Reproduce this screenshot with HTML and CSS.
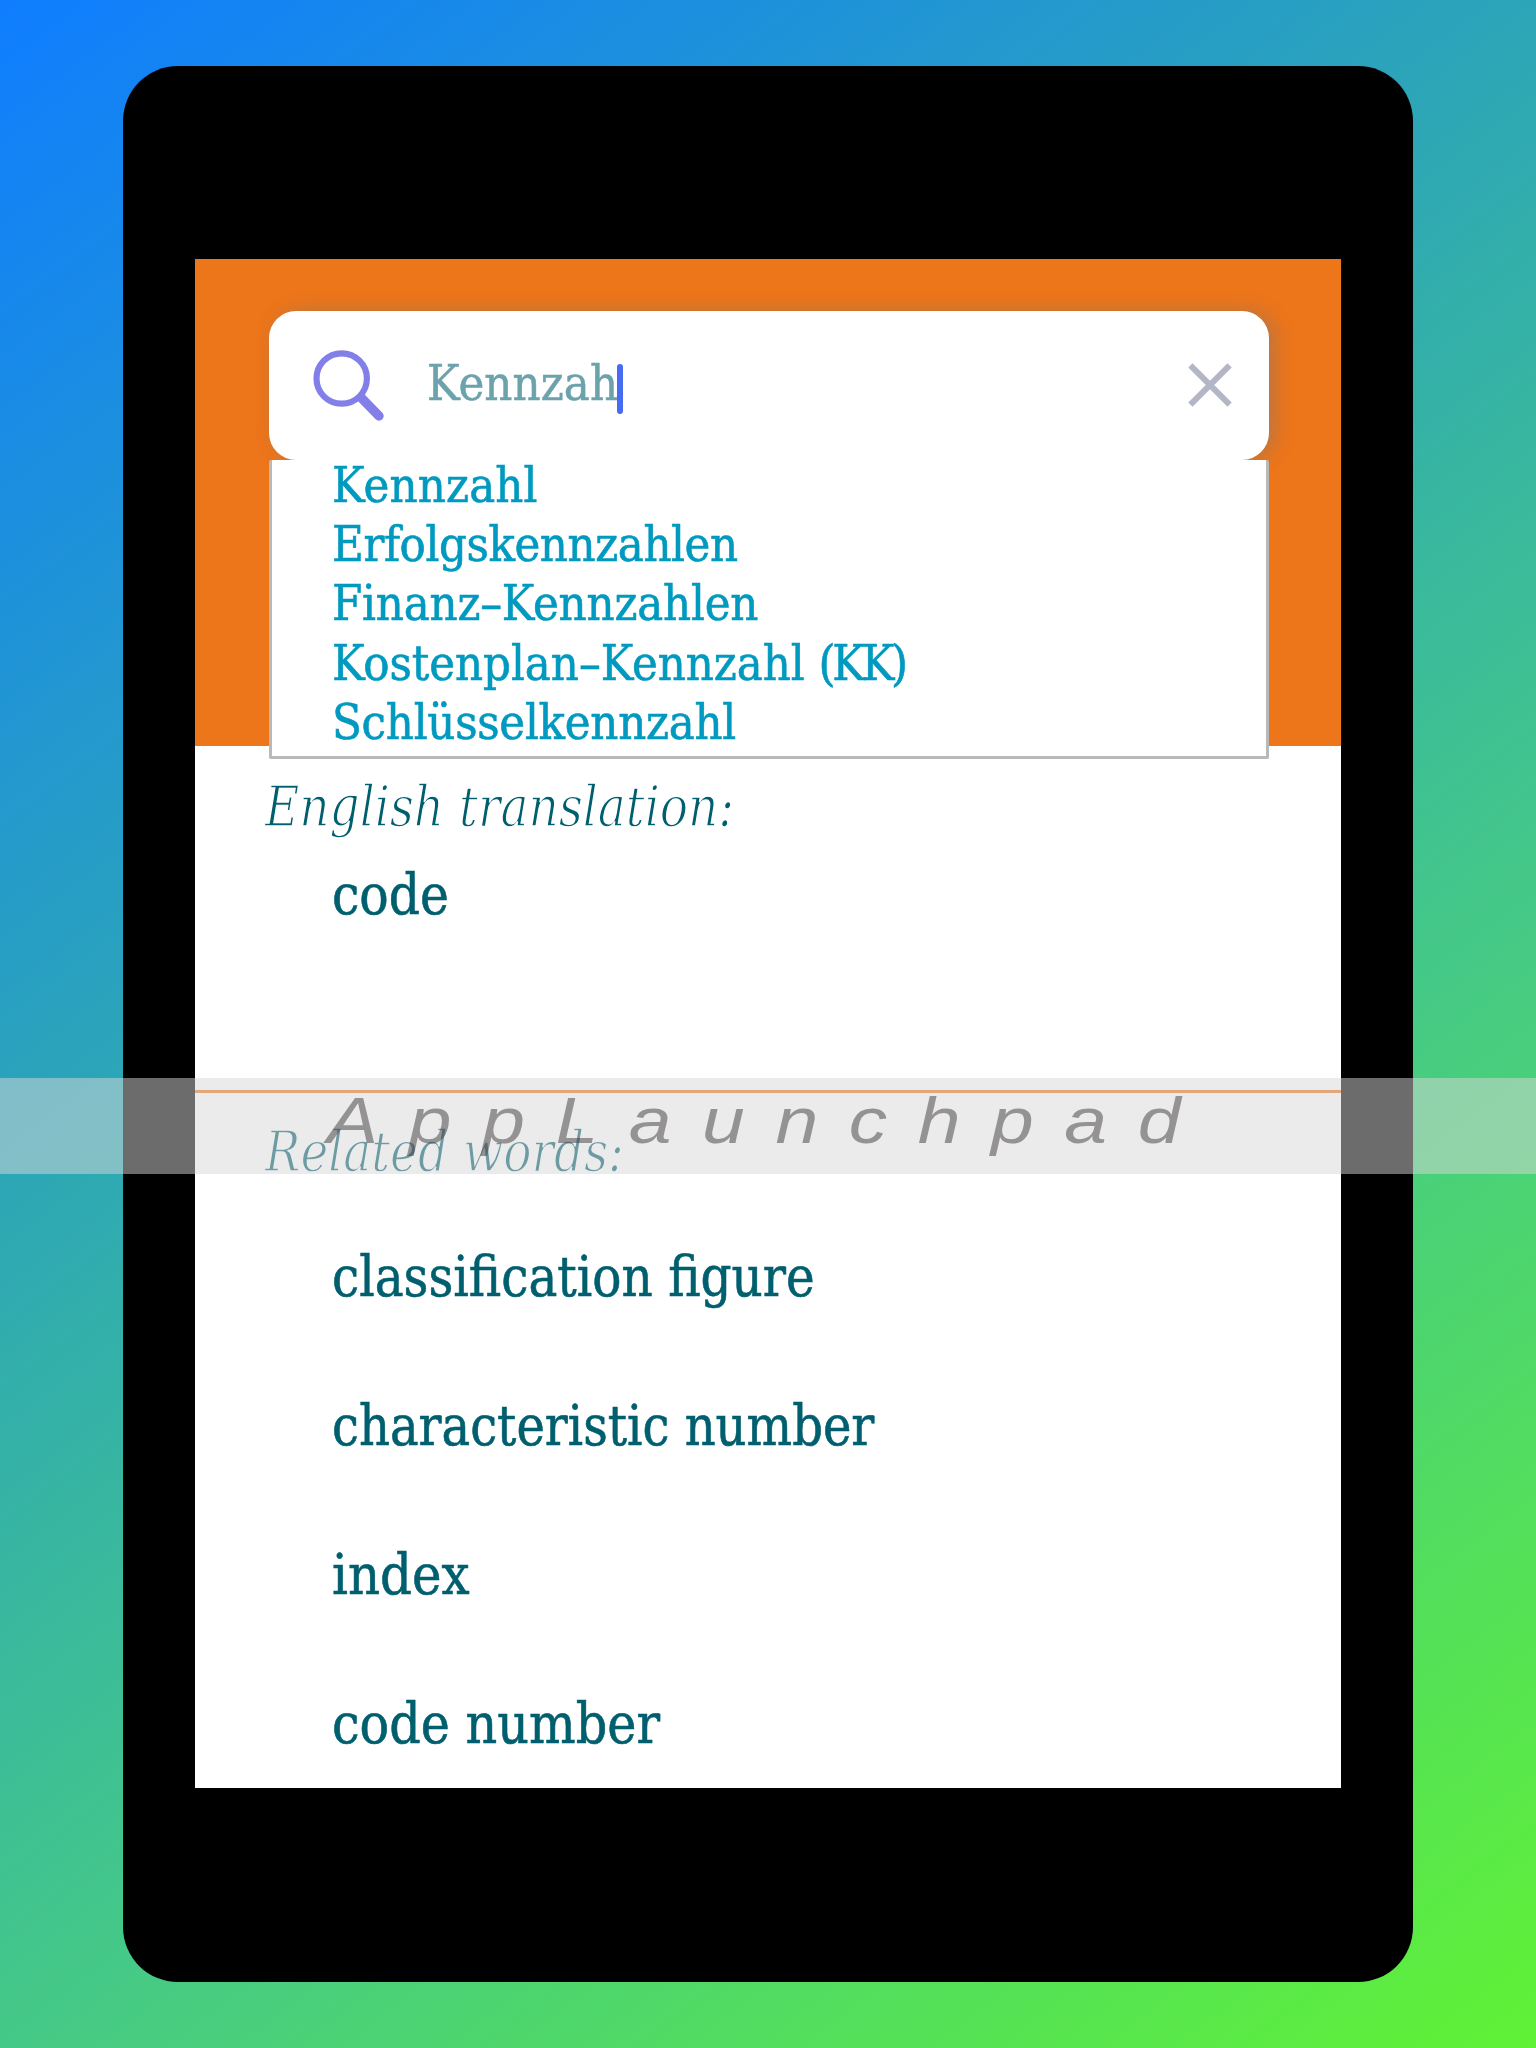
FILE: index.html
```html
<!DOCTYPE html>
<html lang="en">
<head>
<meta charset="utf-8">
<title>Dictionary</title>
<link rel="stylesheet" href="styles.css">
</head>
<body>
<div class="stage">
  <div class="tablet">
    <main class="screen">
      <header class="header">
        <div class="search">
          <svg class="search-icon" width="76" height="76" viewBox="0 0 76 76" fill="none" stroke="#827fe8">
            <circle cx="30.7" cy="30.5" r="25.2" stroke-width="6.2"/>
            <path d="M50.5 50L68 68" stroke-width="9.4" stroke-linecap="round"/>
          </svg>
          <span class="query">Kennzah</span><span class="caret"></span>
          <svg class="clear" width="44" height="44" viewBox="0 0 44 44" stroke="#b3b7c5" stroke-width="6"><path d="M2.4 2.4L41.6 41.6M41.6 2.4L2.4 41.6"/></svg>
        </div>
        <ul class="suggestions">
          <li class="s1">Kennzahl</li>
          <li class="s2">Erfolgskennzahlen</li>
          <li class="s3">Finanz–Kennzahlen</li>
          <li class="s4">Kostenplan–Kennzahl <span class="abbr">(KK)</span></li>
          <li class="s5">Schlüsselkennzahl</li>
        </ul>
      </header>
      <section class="translation">
        <h2 class="title">English translation:</h2>
        <p class="word w0">code</p>
      </section>
      <section class="related">
        <h2 class="title">Related words:</h2>
        <p class="word w1">classification figure</p>
        <p class="word w2">characteristic number</p>
        <p class="word w3">index</p>
        <p class="word w4">code number</p>
      </section>
    </main>
  </div>
  <div class="watermark"><span class="brand">AppLaunchpad</span></div>
</div>
</body>
</html>
```
FILE: styles.css
```css
* { box-sizing: border-box; margin: 0; padding: 0; }
body { width: 1536px; height: 2048px; overflow: hidden; font-family: "DejaVu Serif Condensed", "DejaVu Serif", serif; font-stretch: condensed; }
.stage { position: relative; height: 2048px; padding: 66px 123px; background: linear-gradient(143.13deg, #0f7dff, #2ca5b8 36%, #45c987 64%, #60f235); }
.tablet { width: 1290px; height: 1916px; padding: 193px 72px; border-radius: 55px; background: #000; }
.screen { width: 1146px; height: 1529px; background: #fff; overflow: hidden; }
.header { height: 487px; padding: 52px 72px 0 74px; background: #ed751a; }
.search { display: flex; align-items: flex-start; height: 149px; border-radius: 27px; background: #fff; box-shadow: 6px 0 18px rgba(120, 120, 120, .45); }
.search-icon { margin: 37px 0 0 42px; }
.query { margin: 46px 0 0 40px; width: 190px; font-size: 48.5px; line-height: 52px; letter-spacing: .1px; color: #6ca2ac; white-space: nowrap; -webkit-text-stroke: .5px #6ca2ac; }
.caret { width: 6px; height: 50px; margin-top: 53px; border-radius: 3px; background: #476cf2; }
.clear { margin: 52px 0 0 565px; }
.suggestions { position: relative; height: 299px; padding-left: 60px; list-style: none; background: #fff; border: 3px solid #b9b9b9; border-top: 0; border-radius: 2px; font-size: 48.5px; line-height: 59.2px; color: #0099bf; white-space: nowrap; -webkit-text-stroke: .6px #0099bf; }
.suggestions li { position: relative; top: -4px; }
.s1 { letter-spacing: .16px; }
.s2 { letter-spacing: -.42px; }
.s3 { letter-spacing: -.2px; }
.s4 { letter-spacing: -.05px; }
.abbr { letter-spacing: -3.2px; }
.s5 { letter-spacing: -.27px; }
.translation { height: 344px; padding: 28px 70px 0; }
.title { font-size: 56px; line-height: 66px; font-style: italic; font-weight: 400; color: #005f6e; white-space: nowrap; -webkit-text-stroke: 1.3px #fff; transform: scaleX(.933); transform-origin: 0 50%; }
.word { margin-left: 67px; font-size: 56px; line-height: 66px; color: #005f6e; white-space: nowrap; -webkit-text-stroke: .6px #005f6e; transform-origin: 0 50%; }
.w0 { margin-top: 22px; transform: scaleX(.97); }
.related { height: 700px; padding: 26px 70px 0; border-top: 3px solid #ed751a; }
.w1 { margin-top: 59px; transform: scaleX(.963); }
.w2, .w3, .w4 { margin-top: 83px; }
.w2 { transform: scaleX(.954); }
.w3 { transform: scaleX(.99); }
.w4 { transform: scaleX(.978); }
.watermark { position: absolute; left: 0; top: 1078px; width: 1536px; height: 96px; padding-left: 327px; background: rgba(215, 215, 215, .5); }
.brand { display: inline-block; font: italic 64px/86px "Liberation Sans", sans-serif; letter-spacing: 25.5px; color: rgba(62, 58, 60, .5); transform: scaleX(1.2); transform-origin: 0 50%; }
```
